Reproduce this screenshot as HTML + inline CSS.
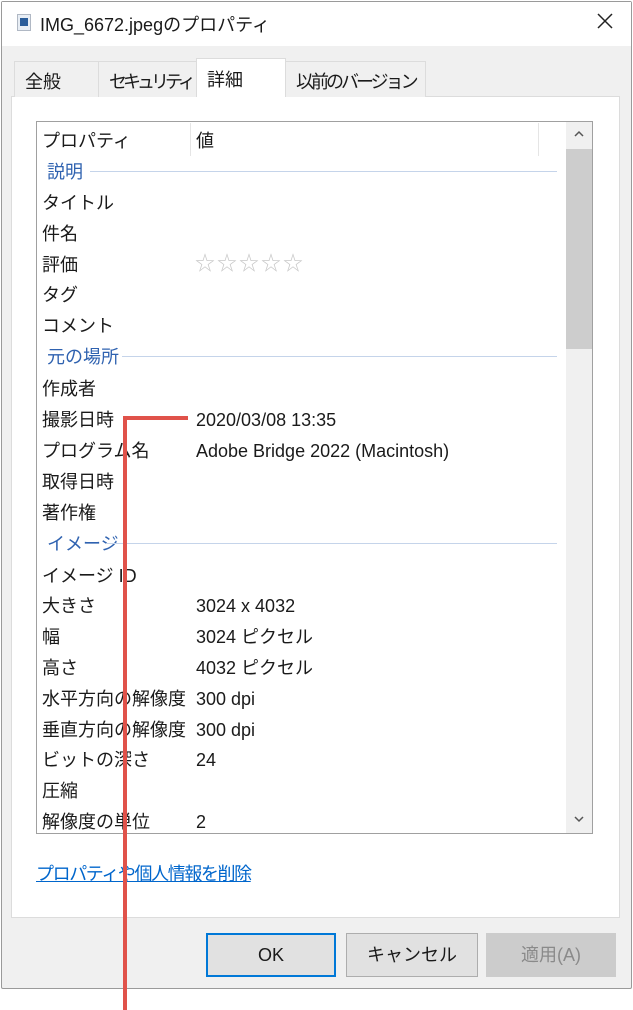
<!DOCTYPE html>
<html><head><meta charset="utf-8"><style>
*{margin:0;padding:0;box-sizing:border-box}
body{width:633px;height:1010px;background:#fff;position:relative;overflow:hidden;font-family:"Liberation Sans","Noto Sans CJK JP",sans-serif;color:#1a1a1a}
.a{position:absolute;white-space:nowrap}
.win{position:absolute;left:1px;top:1px;width:631px;height:988px;border:1px solid #9a9a9a;background:#f0f0f0;border-radius:2px}
.title{position:absolute;left:0;top:0;width:629px;height:44px;background:#fff}
.tab{position:absolute;top:61px;height:36px;border:1px solid #dcdcdc;border-bottom:none;background:#f0f0f0;font-size:18px;padding:6px 0 0 10px;white-space:nowrap;overflow:hidden}
.panel{position:absolute;left:11px;top:96px;width:609px;height:822px;background:#fff;border:1px solid #dcdcdc}
.list{position:absolute;left:36px;top:121px;width:557px;height:713px;border:1px solid #a0a0a0;background:#fff}
.r{position:absolute;font-size:18px;line-height:20px;white-space:nowrap}
.g{position:absolute;font-size:18px;color:#2f62b0;line-height:20px}
.gl{position:absolute;height:1px;background:#c5d4ea}
.btn{position:absolute;top:933px;height:44px;border:1px solid #adadad;background:#e1e1e1;font-size:18px;text-align:center;line-height:42px}
</style></head><body>
<div class="win">
<div class="title"></div>
</div>
<svg class="a" style="left:17px;top:14px" width="14" height="17"><rect x="0.5" y="0.5" width="13" height="16" fill="#e8eef5" stroke="#b0b8c4"/><rect x="3" y="4" width="8" height="8" fill="#2a5d9a"/></svg>
<div class="a" style="left:40px;top:11px;font-size:18px">IMG_6672.jpegのプロパティ</div>
<svg class="a" style="left:597px;top:13px" width="16" height="16"><path d="M1 1L15 15M15 1L1 15" stroke="#222" stroke-width="1.5"/></svg>
<div class="panel"></div>
<div class="tab" style="left:14px;width:85px">全般</div>
<div class="tab" style="left:98px;width:99px;letter-spacing:-4px">セキュリティ</div>
<div class="tab" style="left:196px;top:58px;height:39px;width:90px;background:#fff;padding-top:7px">詳細</div>
<div class="tab" style="left:285px;width:141px;letter-spacing:-3px">以前のバージョン</div>
<div class="list"></div>
<div class="a" style="left:190px;top:123px;width:1px;height:33px;background:#e5e5e5"></div>
<div class="a" style="left:538px;top:123px;width:1px;height:33px;background:#e5e5e5"></div>
<div class="a" style="left:566px;top:122px;width:26px;height:711px;background:#f0f0f0"></div>
<div class="a" style="left:566px;top:149px;width:26px;height:200px;background:#cdcdcd"></div>
<svg class="a" style="left:574px;top:130px" width="10" height="8"><path d="M1 6L5 2L9 6" stroke="#555" stroke-width="1.5" fill="none"/></svg>
<svg class="a" style="left:574px;top:815px" width="10" height="8"><path d="M1 2L5 6L9 2" stroke="#555" stroke-width="1.5" fill="none"/></svg>
<div class="r" style="left:42px;top:131px">プロパティ</div>
<div class="r" style="left:196px;top:131px">値</div>
<div class="g" style="left:47px;top:162px">説明</div><div class="gl" style="left:90px;top:171px;width:467px"></div>
<div class="r" style="left:42px;top:193px">タイトル</div>
<div class="r" style="left:42px;top:224px">件名</div>
<div class="r" style="left:42px;top:255px">評価</div>
<div class="r" style="left:195px;top:254px;color:#c8c8c8;font-size:20px;letter-spacing:2px">☆☆☆☆☆</div>
<div class="r" style="left:42px;top:285px">タグ</div>
<div class="r" style="left:42px;top:316px">コメント</div>
<div class="g" style="left:47px;top:347px">元の場所</div><div class="gl" style="left:122px;top:356px;width:435px"></div>
<div class="r" style="left:42px;top:379px">作成者</div>
<div class="r" style="left:42px;top:410px">撮影日時</div>
<div class="r" style="left:196px;top:410px">2020/03/08 13:35</div>
<div class="r" style="left:42px;top:441px">プログラム名</div>
<div class="r" style="left:196px;top:441px">Adobe Bridge 2022 (Macintosh)</div>
<div class="r" style="left:42px;top:472px">取得日時</div>
<div class="r" style="left:42px;top:503px">著作権</div>
<div class="g" style="left:47px;top:534px">イメージ</div><div class="gl" style="left:106px;top:543px;width:451px"></div>
<div class="r" style="left:42px;top:566px">イメージ ID</div>
<div class="r" style="left:42px;top:596px">大きさ</div><div class="r" style="left:196px;top:596px">3024 x 4032</div>
<div class="r" style="left:42px;top:627px">幅</div><div class="r" style="left:196px;top:627px">3024 ピクセル</div>
<div class="r" style="left:42px;top:658px">高さ</div><div class="r" style="left:196px;top:658px">4032 ピクセル</div>
<div class="r" style="left:42px;top:689px">水平方向の解像度</div><div class="r" style="left:196px;top:689px">300 dpi</div>
<div class="r" style="left:42px;top:720px">垂直方向の解像度</div><div class="r" style="left:196px;top:720px">300 dpi</div>
<div class="r" style="left:42px;top:750px">ビットの深さ</div><div class="r" style="left:196px;top:750px">24</div>
<div class="r" style="left:42px;top:781px">圧縮</div>
<div class="r" style="left:42px;top:812px">解像度の単位</div><div class="r" style="left:196px;top:812px">2</div>
<div class="a" style="left:36px;top:860px;font-size:18px;letter-spacing:-1.4px;color:#0066cc;text-decoration:underline">プロパティや個人情報を削除</div>
<div class="btn" style="left:206px;width:130px;border:1px solid #0078d7;box-shadow:inset 0 0 0 1px #0078d7">OK</div>
<div class="btn" style="left:346px;width:132px">キャンセル</div>
<div class="btn" style="left:486px;width:130px;background:#cccccc;border-color:#cccccc;color:#8a8a8a">適用(A)</div>
<div class="a" style="left:123px;top:416px;width:4px;height:594px;background:#e0524a"></div>
<div class="a" style="left:123px;top:416px;width:65px;height:4px;background:#e0524a"></div>
</body></html>
